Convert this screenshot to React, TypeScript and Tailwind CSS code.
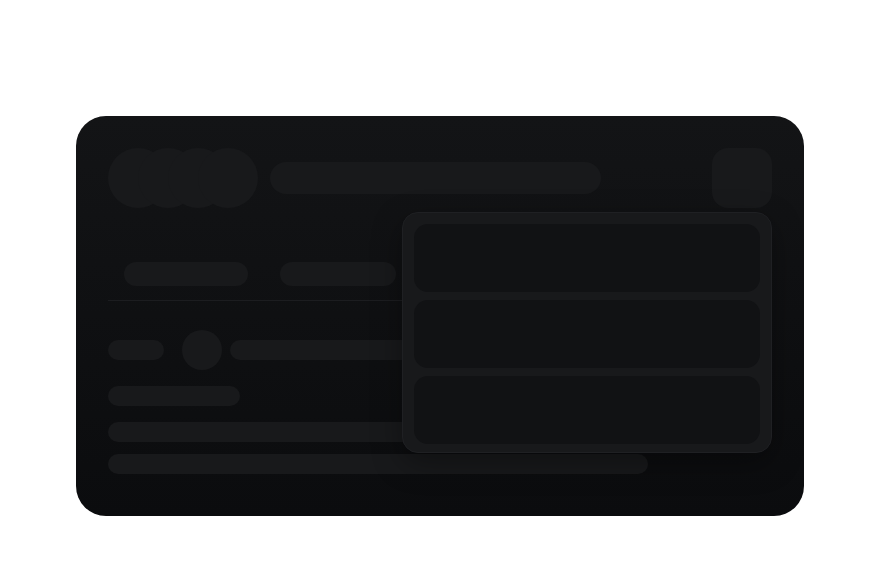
const Bar = ({ className }: { className: string }) => (
  <div className={`rounded-full bg-[#18191b] ${className}`} />
);

const App = () => {
  return (
    <div className="w-[880px] h-[580px] bg-white pt-[116px] pl-[76px]">
      <div className="relative w-[728px] h-[400px] rounded-[30px] bg-gradient-to-b from-[#131416] to-[#0b0c0e] p-8 overflow-hidden">
        {/* header */}
        <div className="flex items-center">
          <div className="flex -space-x-[30px]">
            <div className="w-[60px] h-[60px] rounded-full bg-[#18191b]" />
            <div className="w-[60px] h-[60px] rounded-full bg-[#18191b]" />
            <div className="w-[60px] h-[60px] rounded-full bg-[#18191b]" />
            <div className="w-[60px] h-[60px] rounded-full bg-[#18191b]" />
          </div>
          <Bar className="ml-3 w-[331px] h-8" />
          <div className="ml-auto w-[60px] h-[60px] rounded-2xl bg-[#18191b]" />
        </div>

        {/* tabs */}
        <div className="mt-[54px] flex pb-[14px] border-b border-[#1c1d20]">
          <div className="px-4">
            <Bar className="w-[124px] h-6" />
          </div>
          <div className="px-4">
            <Bar className="w-[116px] h-6" />
          </div>
        </div>

        {/* rows */}
        <div className="mt-[29px] flex items-center">
          <Bar className="w-14 h-5" />
          <div className="ml-[18px] w-10 h-10 rounded-full bg-[#18191b]" />
          <Bar className="ml-2 w-[320px] h-5" />
        </div>
        <Bar className="mt-4 w-[132px] h-5" />
        <Bar className="mt-4 w-[600px] h-5" />
        <Bar className="mt-3 w-[540px] h-5" />

        {/* popover */}
        <div className="absolute left-[326px] top-[96px] w-[370px] rounded-2xl border border-[#1f2023] bg-[#18191b] pt-[11px] px-[11px] pb-2 flex flex-col gap-2 shadow-[0_10px_30px_rgba(0,0,0,0.35)]">
          <div className="h-[68px] rounded-[14px] bg-[#111214]" />
          <div className="h-[68px] rounded-[14px] bg-[#111214]" />
          <div className="h-[68px] rounded-[14px] bg-[#111214]" />
        </div>
      </div>
    </div>
  );
};

export default App;
